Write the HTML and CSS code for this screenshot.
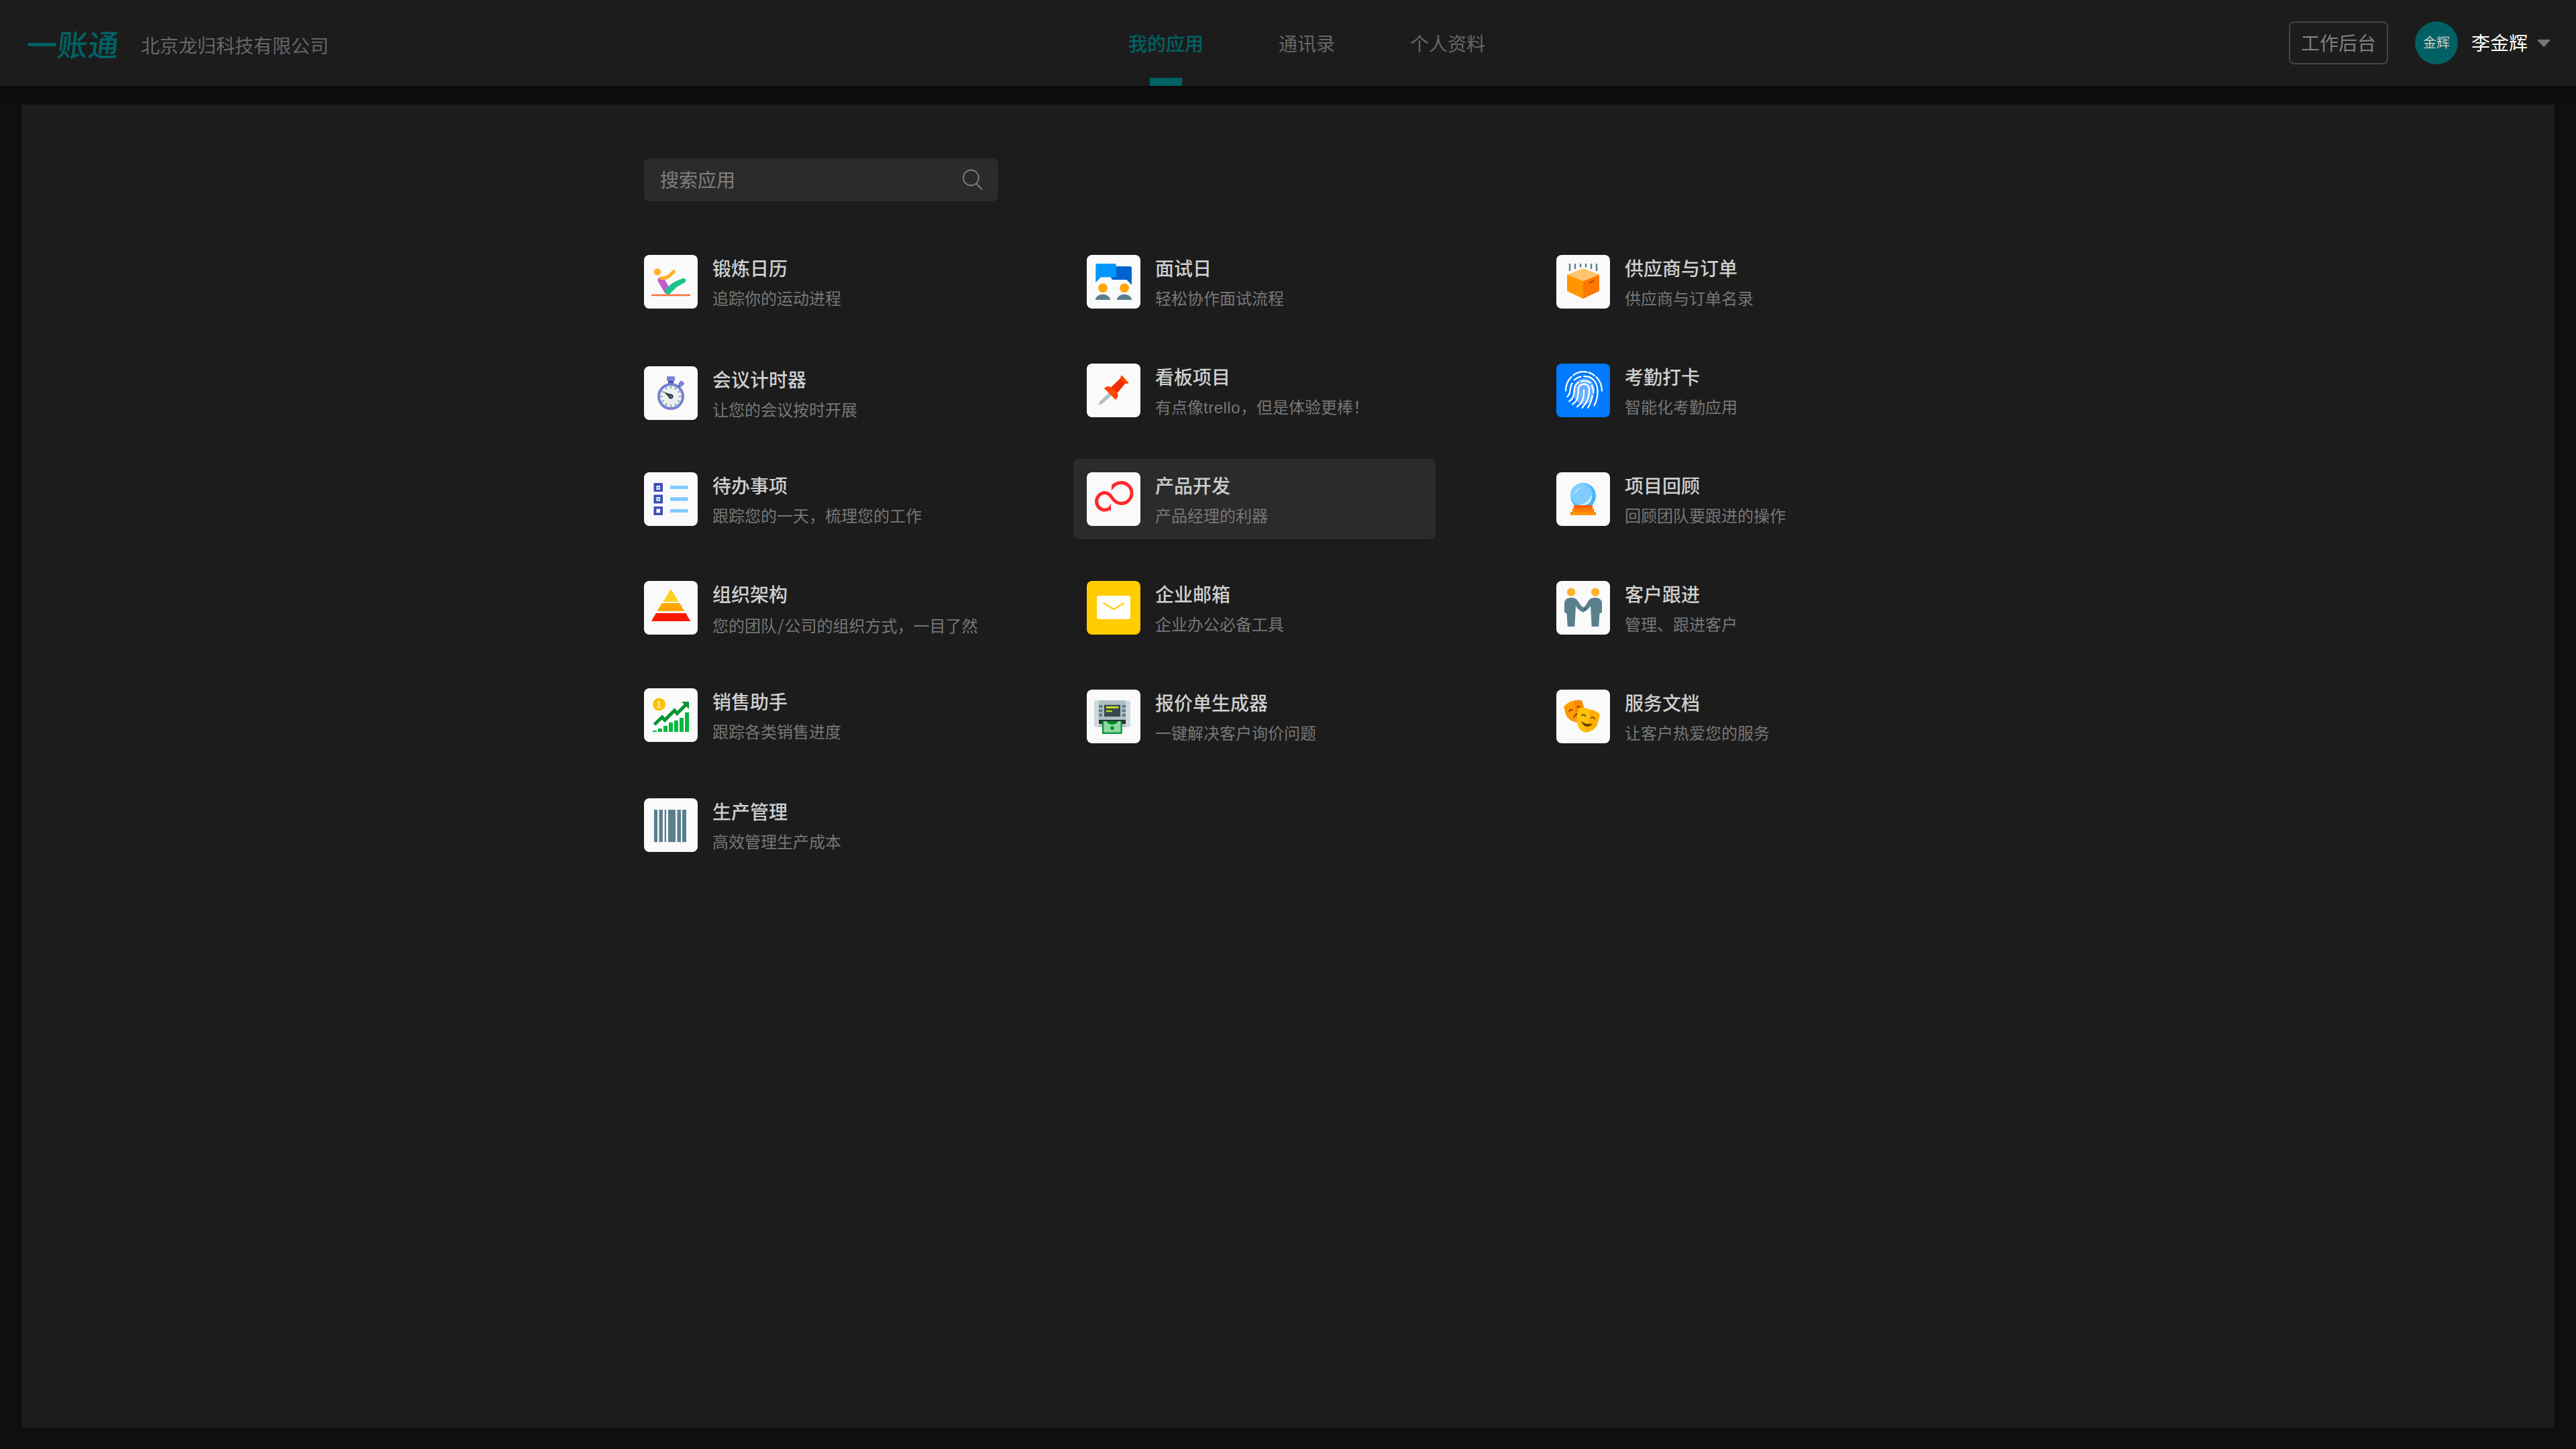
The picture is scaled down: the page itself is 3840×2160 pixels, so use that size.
FILE: index.html
```html
<!DOCTYPE html>
<html lang="zh-CN">
<head>
<meta charset="utf-8">
<title>一账通 - 我的应用</title>
<link rel="stylesheet" href="styles.css">
</head>
<body>
<header class="header">
  <div class="brand">
    <span class="logo">一账通</span>
    <span class="company">北京龙归科技有限公司</span>
  </div>
  <nav class="nav">
    <a class="nav-item active">我的应用</a>
    <a class="nav-item">通讯录</a>
    <a class="nav-item">个人资料</a>
  </nav>
  <div class="account">
    <button class="console">工作后台</button>
    <span class="avatar">金辉</span>
    <span class="user">李金辉</span>
    <svg class="caret" viewBox="0 0 20 11"><path d="M1 0H19Q20.500 0 19.300 1.300L11 10.300Q10 11.300 9 10.300L.7 1.300Q-.5 0 1 0Z"/></svg>
  </div>
</header>
<main class="main">
  <div class="search">
    <span class="placeholder">搜索应用</span>
    <svg class="search-icon" viewBox="0 0 30 32"><ellipse cx="12.500" cy="13" rx="11.500" ry="11.500"/><path d="M20 21.500L29 30.500"/></svg>
  </div>
  <div class="apps">
    <div class="column first">
      <div class="app">
        <svg class="tile" viewBox="0 0 80 80"><circle cx="20" cy="25.300" r="5.300" fill="#ffb32c"/><path d="M25.500 37.500L34.500 53" stroke="#c65bd0" stroke-width="10" stroke-linecap="round" fill="none"/><path d="M22.500 38.500L31 37L28 33.500Z" fill="#b52fc4"/><path d="M25.500 35Q34 34.500 38 31L44.300 25" stroke="#ffb32c" stroke-width="5.200" stroke-linecap="round" fill="none"/><path d="M30.500 54Q35 47 44 41Q52 37 58 34.800A3.500 3.500 0 0 1 61.500 40.500Q54 45 48 48.500L38.500 58Q35.500 60 33.500 57.500Z" fill="#1bc48c"/><path d="M11 58.700H69V61.300H11Z" fill="#ff6b3b"/></svg>
        <div class="info"><h3>锻炼日历</h3><p>追踪你的运动进程</p></div>
      </div>
      <div class="app">
        <svg class="tile" viewBox="0 0 80 80"><path d="M36 21H44V27H36Z" fill="#3f4db5"/><path d="M50.500 29L54 25L57 28L53 31.500Z" fill="#3f4db5"/><rect x="34" y="15" width="12" height="7" rx="1" fill="#7986d5"/><rect x="52.200" y="22.300" width="7" height="7" rx="1.500" transform="rotate(42 55.700 25.800)" fill="#7986d5"/><circle cx="40" cy="45" r="18" fill="#eceff0" stroke="#7681d0" stroke-width="4"/><path d="M40 29.500V33M40 57V60.500M24.500 45H28M52 45H55.500M32.250 31.600L34 34.600M46 55.400L47.750 58.400M26.600 37.250L29.600 39M50.400 51L53.400 52.750M47.750 31.600L46 34.600M34 55.400L32.250 58.400M53.400 37.250L50.400 39M29.600 51L26.600 52.750" stroke="#84a9a5" stroke-width="2" fill="none"/><path d="M29.500 38.200L41.500 42.300L38.500 47.500Z" fill="#263a46"/><circle cx="40" cy="45" r="3.500" fill="#263a46"/><circle cx="40" cy="45" r="1.200" fill="#90a4ae"/></svg>
        <div class="info"><h3>会议计时器</h3><p>让您的会议按时开展</p></div>
      </div>
      <div class="app">
        <svg class="tile" viewBox="0 0 80 80"><path d="M14.500 16H28V29H14.500ZM14.500 33.500H28V46.500H14.500ZM14.500 51H28V64H14.500Z" fill="#3f4fb8"/><path d="M18.500 20H24V26H18.500ZM18.500 37H24V43H18.500ZM18.500 54.500H24V60.500H18.500Z" fill="#fff"/><path d="M20 21.700H22.700V24.300H20ZM20 38.700H22.700V41.300H20Z" fill="#109cf0"/><path d="M39 20H65.500V25H39ZM39 37.300H65.500V42.700H39ZM39 55H65.500V60H39Z" fill="#7fc9ff"/></svg>
        <div class="info"><h3>待办事项</h3><p>跟踪您的一天，梳理您的工作</p></div>
      </div>
      <div class="app">
        <svg class="tile" viewBox="0 0 80 80"><path d="M40 12L51.500 31H28.500Z" fill="#ffd11c"/><path d="M27 33H53L60.300 45H19.700Z" fill="#ffa500"/><path d="M17.800 48H62.200L69.300 60H11Z" fill="#ff1800"/></svg>
        <div class="info"><h3>组织架构</h3><p>您的团队<span class="slash">/</span>公司的组织方式，一目了然</p></div>
      </div>
      <div class="app">
        <svg class="tile" viewBox="0 0 80 80"><circle cx="22.600" cy="24" r="9.500" fill="#ffc000"/><text class="coin" x="22.300" y="29.300" text-anchor="middle">1</text><path d="M15.500 54L27 43L31 47.500L45.500 33L49.300 37.500L62 25" stroke="#009432" stroke-width="5" fill="none"/><path d="M56 20H67V31Z" fill="#009432"/><path d="M13 63H19V65H13ZM21 60H27V65H21ZM29 56H35V65H29ZM37 51H43V65H37ZM45 48H51V65H45ZM53 44H59V65H53ZM61 36H67V65H61Z" fill="#00b740"/></svg>
        <div class="info"><h3>销售助手</h3><p>跟踪各类销售进度</p></div>
      </div>
      <div class="app">
        <svg class="tile" viewBox="0 0 80 80"><path d="M15 17H20V65.300H15ZM22.500 17H28V65.300H22.500ZM30.700 17H33V65.300H30.700ZM36 17H47V65.300H36ZM49.500 17H55V65.300H49.500ZM57 17H63V65.300H57Z" fill="#5a7f8c"/></svg>
        <div class="info"><h3>生产管理</h3><p>高效管理生产成本</p></div>
      </div>
    </div>
    <div class="column second">
      <div class="app">
        <svg class="tile" viewBox="0 0 80 80"><path d="M39 17H64Q67 17 67 20V44.700L59.500 37H39.500Q36.500 37 36.500 34V20Z" fill="#0062cc"/><path d="M16.300 13H41Q44 13 44 16V30.300Q44 33.300 41 33.300H21L13.300 41.300V16Q13.300 13 16.300 13Z" fill="#0098ff"/><circle cx="24" cy="49.300" r="6.900" fill="#ffa500"/><circle cx="56" cy="49.300" r="6.900" fill="#ffa500"/><path d="M13 67V65.500C15 61 19 58.700 24 58.700S33 61 35 65.500V67ZM45 67V65.500C47 61 51 58.700 56 58.700S65 61 67 65.500V67Z" fill="#5a7f8c"/></svg>
        <div class="info"><h3>面试日</h3><p>轻松协作面试流程</p></div>
      </div>
      <div class="app">
        <svg class="tile" viewBox="0 0 80 80"><path d="M17.400 62.300L19.500 56.500L33 43.500L37 47.500L23 60Z" fill="#b0bec5"/><path d="M36 35.500L50.500 21.500L58 29L45.500 44Z" fill="#f03000"/><path d="M26 37C28 33.500 33.500 33 37 35.500L45.500 44C47.500 47.500 46.500 51 43 54Z" fill="#ff4500"/><path d="M52 17.300L62.500 28.500C61 31 57.500 30.500 54 27C50 23.500 49 20.500 52 17.300Z" fill="#ff4500"/></svg>
        <div class="info"><h3>看板项目</h3><p>有点像<span class="latin">trello</span>，但是体验更棒！</p></div>
      </div>
      <div class="app selected">
        <svg class="tile" viewBox="0 0 80 80"><path d="M38.500 21.500C42 17.500 46.500 15.500 51.500 15.500A15.500 15.500 0 0 1 51.500 46.500C44.500 46.500 40.500 42.500 37.300 37.500C34.300 33 31.500 30.500 26 30.500A13 13 0 0 0 26 56.300C29.500 56.300 32 55.300 34.500 53.500" stroke="#ff2a2d" stroke-width="5" fill="none"/><path d="M37 19L39.500 17.500L42 21.500Q39 24 37 27.500ZM36 46.500V57L33.500 56.500L32.500 51.500Q34.500 50 36 46.500Z" fill="#ff2a2d"/></svg>
        <div class="info"><h3>产品开发</h3><p>产品经理的利器</p></div>
      </div>
      <div class="app">
        <svg class="tile mail" viewBox="0 0 80 80"><rect x="15" y="22" width="50" height="35" rx="3" fill="#fff"/><path d="M24.400 32.700L40.300 42.300L56 32.700" stroke="#fc0" stroke-width="2.200" fill="none"/></svg>
        <div class="info"><h3>企业邮箱</h3><p>企业办公必备工具</p></div>
      </div>
      <div class="app">
        <svg class="tile" viewBox="0 0 80 80"><rect x="11" y="16" width="54" height="40" rx="3" fill="#cfd8dc"/><path d="M18 16H58V56H18Z" fill="#b0bec5"/><path d="M26 22.700H50V40.300H26Z" fill="#37474f"/><path d="M29 25H47.300V28H29ZM29 31H38V33.300H29Z" fill="#cddc1c"/><path d="M18 23H23.300V27H18ZM18 29.500H23.300V33.500H18ZM18 36H23.300V40H18ZM52.700 23H58V27H52.700ZM52.700 29.500H58V33.500H52.700ZM52.700 36H58V40H52.700Z" fill="#5a7f8c"/><path d="M18 45H58V51H18Z" fill="#263238"/><path d="M23 47H52.700V66H23Z" fill="#009432"/><path d="M25.300 47H50.500V63.700H25.300Z" fill="#8fd8a0"/><path d="M29 47H47Q44 52 38 52T29 47Z" fill="#008a20"/><circle cx="38" cy="57.300" r="2.800" fill="#009432"/></svg>
        <div class="info"><h3>报价单生成器</h3><p>一键解决客户询价问题</p></div>
      </div>
    </div>
    <div class="column third">
      <div class="app">
        <svg class="tile" viewBox="0 0 80 80"><path d="M20 13V24M28 13V21M36 13V18.500M44 13V18.500M52 13V21M60 13V24" stroke="#5a7f8c" stroke-width="2.400" fill="none"/><path d="M40 20L64 29.300L40 40L16 29.300Z" fill="#ffc670"/><path d="M16 29.300L40 39.300V65.300L16 54Z" fill="#ff9600"/><path d="M64 29.300L40 39.300V65.300L64 54Z" fill="#ff7800"/><path d="M49 40L57 36.800V39.500L49 42.800Z" fill="#c05000"/></svg>
        <div class="info"><h3>供应商与订单</h3><p>供应商与订单名录</p></div>
      </div>
      <div class="app">
        <svg class="tile finger" viewBox="0 0 80 80"><path d="M27 34C29 26 35 22 42 22C52 22 57 30 57 39C57 51 50 61 40 61C31 60 26 52 26 44Z" fill="#66afff"/><path d="M14 40.500Q14 28 22.500 19.700M25.500 17.200Q34 10.500 45 12.500M48 13.200Q53 14.500 57 18M59.500 20Q67.500 28 68 40.500M16.300 49.300C23 44 19 36 23.500 29.500M26.500 24.500Q31 20.500 36.500 19.300M41 19C54 18.500 61.500 28 61.500 42C61.500 51 59.500 57 56.500 62.300M19.200 56.300C29 50 25 41 28 33Q30 29.500 33 28M37 26.500Q45 24.500 50.500 28.500M53 32.500Q55.500 38 55.200 43M53.700 48Q52 58 47 65.700M24.300 60.500C34 54 32 45 33 38A8 7.500 0 0 1 49 38C49.500 49 45 59 38.500 66M31 64.300C41 57 41 49 41 39.500" stroke="#fff" stroke-width="2.300" stroke-linecap="round" fill="none"/></svg>
        <div class="info"><h3>考勤打卡</h3><p>智能化考勤应用</p></div>
      </div>
      <div class="app">
        <svg class="tile" viewBox="0 0 80 80"><circle cx="40" cy="35" r="19" fill="#40b8ff"/><circle cx="37.500" cy="33" r="16.300" fill="#80ccff"/><path d="M27 34Q28 24 37.500 22.500Q30 26 27 34ZM35 48Q49 46 52.500 33Q54.500 48 39 49.500Z" fill="#d5efff"/><path d="M26 49H54V54H26Z" fill="#ff6400"/><path d="M24 54H56V59H24Z" fill="#ff7a00"/><path d="M21 59H59V64H21Z" fill="#ff9100"/></svg>
        <div class="info"><h3>项目回顾</h3><p>回顾团队要跟进的操作</p></div>
      </div>
      <div class="app">
        <svg class="tile" viewBox="0 0 80 80"><g fill="#ffb32c"><circle cx="22" cy="16.700" r="6.200"/><circle cx="58" cy="16.700" r="6.200"/></g><g fill="#5a7f8c"><path d="M12 34C12 28 16 25 22 25C28 25 30.500 27 33 31C36 36 38 38.500 43 41L40 46.700C34 44 31 41 29 37L27.300 68H16.700L15.500 48.500L12 47Z"/><path d="M68 34C68 28 64 25 58 25C52 25 49.500 27 47 31C44 36 42 39 39 41L40 46.700C46 44 49 41 51 37L52.700 68H63.300L64.500 48.500L68 47Z"/></g><path d="M41 40.500L44.500 42L43 44.500Z" fill="#34515c"/></svg>
        <div class="info"><h3>客户跟进</h3><p>管理、跟进客户</p></div>
      </div>
      <div class="app">
        <svg class="tile" viewBox="0 0 80 80"><path d="M11 25.500Q18 18 25 16.500L30 49Q17 46 14 37Z" fill="#ff9a00"/><path d="M25 16.500Q32 15 38 16L41.500 28L36 48L30 49Z" fill="#ff8a00"/><path d="M19 33Q20 28.500 25 30.500M30.500 26.500Q33 23.500 35.500 26.500M26 42Q27 37 33 36.500" stroke="#8a3d00" stroke-width="1.800" fill="none"/><path d="M34 27Q42 26 50 29.500L43.500 64Q34 62 31 51Q29 41 34 27Z" fill="#ffc10a"/><path d="M50 29.500Q60 31 65 37Q63 46 61 53Q56 62 43.500 64Z" fill="#ffb000"/><path d="M37.500 39Q41 35.500 44 40M51 42.500Q55 39.500 57.500 44" stroke="#6d4200" stroke-width="1.800" fill="none"/><path d="M37 46.500Q44 53 54 50.500Q50 56 44.500 55Q39 53.500 37 46.500Z" fill="#6d4200"/></svg>
        <div class="info"><h3>服务文档</h3><p>让客户热爱您的服务</p></div>
      </div>
    </div>
  </div>
</main>
</body>
</html>
```

FILE: styles.css
```css
* {
  box-sizing: border-box;
}

body {
  margin: 0;
  height: 2160px;
  display: flex;
  flex-direction: column;
  background: #0f0f0f;
  color: #cfcfcf;
  font-family: "Liberation Sans", "Noto Sans CJK SC", sans-serif;
  font-size: 28px;
  line-height: 40px;
  white-space: nowrap;
}

.header {
  height: 128px;
  flex: none;
  display: grid;
  grid-template-columns: 1682px 532px 1fr;
  background: #1c1c1c;
  box-shadow: 0 4px 20px rgba(0, 0, 0, .5);
}

.brand {
  display: flex;
  align-items: center;
  padding: 6px 0 0 40px;
}

.logo {
  width: 170px;
  padding-top: 3px;
  color: #016265;
  font-size: 45px;
  font-weight: 500;
  line-height: 60px;
  letter-spacing: 1px;
  transform: skewX(-6deg);
}

.company {
  padding-top: 5px;
  color: #666;
}

.nav {
  display: flex;
  gap: 112px;
}

.nav-item {
  display: flex;
  flex-direction: column;
  align-items: center;
  justify-content: space-between;
  padding-top: 47px;
  color: #666;
}

.nav-item.active {
  color: #016265;
  font-weight: 500;
}

.nav-item.active::after {
  content: "";
  width: 48px;
  height: 12px;
  background: #016265;
}

.account {
  display: flex;
  align-items: center;
  justify-content: flex-end;
  padding-right: 38px;
}

.console {
  width: 148px;
  height: 64px;
  margin-right: 40px;
  padding: 3px 0 0;
  border: 2px solid #444;
  border-radius: 8px;
  background: none;
  color: #808080;
  font: inherit;
}

.avatar {
  width: 64px;
  height: 64px;
  margin-right: 20px;
  border-radius: 50%;
  background: #016063;
  color: #ccc;
  font-size: 20px;
  line-height: 64px;
  text-align: center;
}

.user {
  padding-top: 4px;
  color: #fff;
}

.caret {
  width: 20px;
  height: 11px;
  margin-left: 14px;
  fill: #777;
}

.main {
  flex: 1;
  margin: 28px 32px 32px;
  padding: 80px 928px 0;
  background: #1c1c1c;
}

.search {
  width: 528px;
  height: 64px;
  display: flex;
  align-items: center;
  justify-content: space-between;
  padding: 0 23px 0 24px;
  border-radius: 8px;
  background: #2b2b2b;
}

.placeholder {
  padding-top: 4px;
  color: #808080;
}

.search-icon {
  width: 30px;
  height: 32px;
  fill: none;
  stroke: #808080;
  stroke-width: 1.8;
}

.apps {
  display: flex;
  margin: 60px 0 0 -20px;
}

.column {
  display: grid;
  row-gap: 42px;
  align-content: start;
  width: 540px;
}

.first {
  grid-template-rows: 124px 116px 120px 118px 122px 120px;
  margin-right: 120px;
}

.second {
  margin-right: 160px;
}

.app {
  height: 120px;
  display: flex;
  gap: 22px;
  padding: 20px;
  border-radius: 8px;
}

.selected {
  background: #2b2b2b;
}

.tile {
  width: 80px;
  height: 80px;
  flex: none;
  border-radius: 8px;
  background: #fafafa;
}

.mail {
  background: #fc0;
}

.finger {
  background: #007aff;
}

.coin {
  fill: #fff;
  font-size: 15px;
}

.info {
  padding-top: 2px;
}

.info h3 {
  margin: 0;
  font-size: 28px;
  font-weight: 500;
  line-height: 40px;
}

.info p {
  margin: 7px 0 0;
  color: #777;
  font-size: 24px;
  line-height: 34px;
}

.latin {
  letter-spacing: .5px;
}

.slash {
  padding-left: 1px;
  font-family: "Noto Sans CJK SC", sans-serif;
  letter-spacing: 1px;
}
```
